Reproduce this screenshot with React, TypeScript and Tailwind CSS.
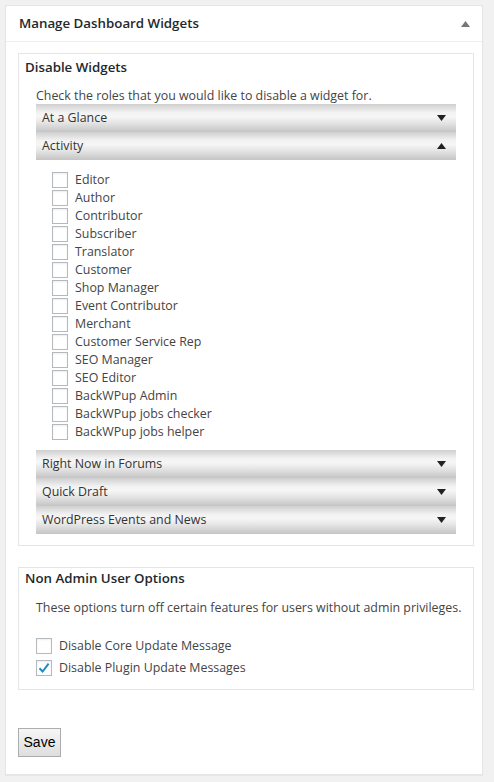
import React from 'react';

const roles = [
  'Editor',
  'Author',
  'Contributor',
  'Subscriber',
  'Translator',
  'Customer',
  'Shop Manager',
  'Event Contributor',
  'Merchant',
  'Customer Service Rep',
  'SEO Manager',
  'SEO Editor',
  'BackWPup Admin',
  'BackWPup jobs checker',
  'BackWPup jobs helper',
];

const Arrow = ({ up, className }: { up?: boolean; className?: string }) => (
  <svg width="9" height="6" viewBox="0 0 9 6" className={className}>
    {up ? <polygon points="0,6 9,6 4.5,0" fill="currentColor" /> : <polygon points="0,0 9,0 4.5,6" fill="currentColor" />}
  </svg>
);

const Bar = ({ label, open }: { label: string; open?: boolean }) => (
  <div className="h-[28px] flex items-center justify-between pl-[6px] pr-[10px] text-[#333] bg-[linear-gradient(to_bottom,#cfcfcf_0%,#f2f2f2_30%,#f6f6f6_45%,#e2e2e2_70%,#c4c4c4_100%)]">
    <span>{label}</span>
    <Arrow up={open} className="text-[#222]" />
  </div>
);

const Box = ({ checked }: { checked?: boolean }) => (
  <span className="w-[16px] h-[16px] border border-[#b4b9be] bg-white shadow-[inset_0_1px_2px_rgba(0,0,0,0.07)] flex items-center justify-center shrink-0">
    {checked && (
      <svg width="14" height="14" viewBox="0 0 14 14">
        <path d="M2.5 7.2 L5.6 10.5 L11.6 2.6" stroke="#1e8cbe" strokeWidth="2" fill="none" />
      </svg>
    )}
  </span>
);

export default function App() {
  return (
    <div className="min-h-[782px] bg-[#f1f1f1] pt-[5px] pl-[5px] text-[12.4px] text-[#444] font-['Open_Sans',sans-serif]">
      <div className="w-[478px] bg-white border border-[#e5e5e5] shadow-[0_1px_1px_rgba(0,0,0,0.04)]">
        <div className="h-[36px] flex items-center justify-between pl-[13px] pr-[12px] border-b border-[#eee]">
          <h2 className="text-[13.3px] font-semibold text-[#23282d]">Manage Dashboard Widgets</h2>
          <Arrow up className="text-[#72777c]" />
        </div>
        <div className="pl-[12px] pr-[8px] pt-[11px] pb-[17px]">
          <div className="border border-[#e5e5e5] pb-[11px]">
            <h3 className="h-[27px] flex items-center pl-[6px] pt-[1px] text-[13.3px] font-semibold text-[#23282d]">Disable Widgets</h3>
            <div className="mx-[17px] mt-[6px]">
              <p className="leading-[17px]">Check the roles that you would like to disable a widget for.</p>
              <Bar label="At a Glance" />
              <Bar label="Activity" open />
              <div className="pl-[16px] pt-[11px] pb-[9px]">
                {roles.map((r) => (
                  <label key={r} className="h-[18px] flex items-center gap-[7px]">
                    <Box />
                    <span>{r}</span>
                  </label>
                ))}
              </div>
              <Bar label="Right Now in Forums" />
              <Bar label="Quick Draft" />
              <Bar label="WordPress Events and News" />
            </div>
          </div>
          <div className="border border-[#e5e5e5] mt-[21px] pb-[13px]">
            <h3 className="h-[21px] flex items-end pl-[6px] text-[13.3px] font-semibold text-[#23282d]">Non Admin User Options</h3>
            <div className="mx-[17px]">
              <p className="mt-[10px] leading-[18px] whitespace-nowrap">These options turn off certain features for users without admin privileges.</p>
              <div className="mt-[21px] flex flex-col gap-[6px]">
                <label className="h-[16px] flex items-center gap-[7px]">
                  <Box />
                  <span>Disable Core Update Message</span>
                </label>
                <label className="h-[16px] flex items-center gap-[7px]">
                  <Box checked />
                  <span>Disable Plugin Update Messages</span>
                </label>
              </div>
            </div>
          </div>
          <button className="mt-[38px] h-[29px] w-[43px] border border-[#adadad] bg-[linear-gradient(to_bottom,#f6f6f6,#dedede)] text-[14px] text-black font-['Liberation_Sans',sans-serif]">Save</button>
        </div>
      </div>
    </div>
  );
}
